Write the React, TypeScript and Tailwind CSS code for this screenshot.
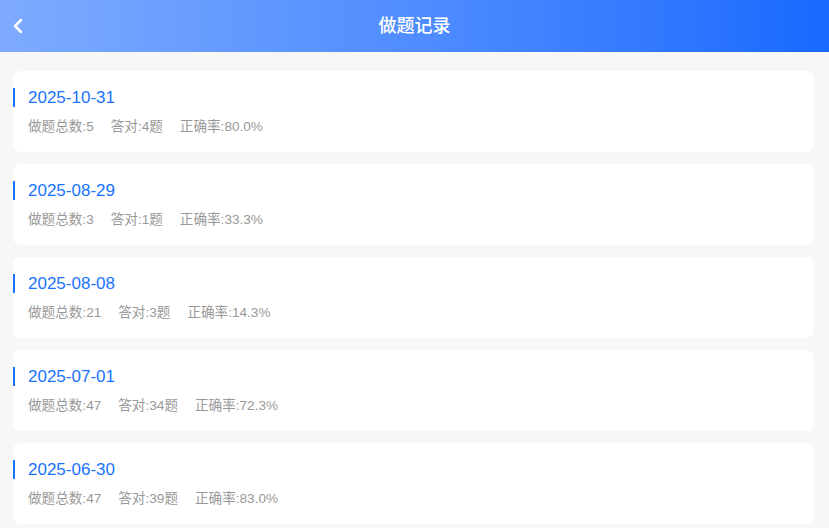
import { ChevronLeft } from "lucide-react";

const records = [
  { date: "2025-10-31", total: 5, right: 4, rate: "80.0%" },
  { date: "2025-08-29", total: 3, right: 1, rate: "33.3%" },
  { date: "2025-08-08", total: 21, right: 3, rate: "14.3%" },
  { date: "2025-07-01", total: 47, right: 34, rate: "72.3%" },
  { date: "2025-06-30", total: 47, right: 39, rate: "83.0%" },
];

export default function App() {
  return (
    <div
      className="min-h-screen bg-[#f7f7f7] overflow-hidden"
      style={{ fontFamily: "'Liberation Sans', 'Noto Sans CJK SC', sans-serif" }}
    >
      <header className="relative h-[52px] flex items-center justify-center bg-gradient-to-r from-[#7eabff] to-[#1769ff]">
        <ChevronLeft className="absolute left-[6px] top-[14px] w-6 h-6 text-white" strokeWidth={2.5} />
        <h1 className="text-[18px] font-medium text-white">做题记录</h1>
      </header>

      <div className="flex flex-col gap-3 pt-[19px] pl-[13px] pr-[15px]">
        {records.map((r) => (
          <div key={r.date} className="h-[81px] bg-white rounded-lg pt-[17px]">
            <div className="flex items-center h-[19px] border-l-2 border-[#1a73ff] pl-[13px]">
              <span className="text-[17px] text-[#1a73ff] leading-none">{r.date}</span>
            </div>
            <div className="flex gap-[17px] pl-[15px] mt-[13px] text-[13.6px] text-[#999] leading-none">
              <span>做题总数:{r.total}</span>
              <span>答对:{r.right}题</span>
              <span>正确率:{r.rate}</span>
            </div>
          </div>
        ))}
      </div>
    </div>
  );
}
